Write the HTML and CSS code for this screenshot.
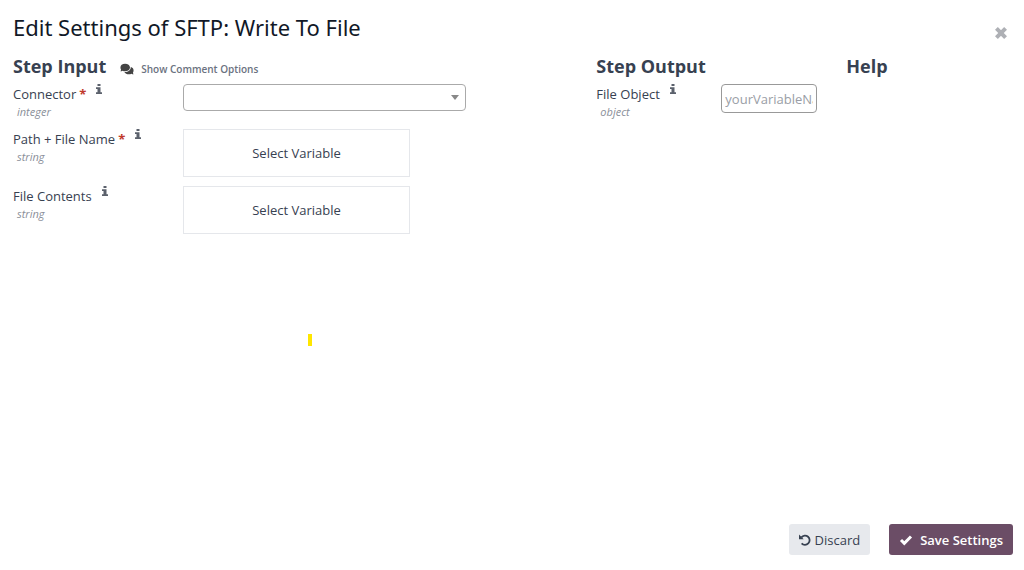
FILE: index.html
```html
<!DOCTYPE html>
<html lang="en">
<head>
<meta charset="utf-8">
<meta name="viewport" content="width=device-width, initial-scale=1">
<title>Edit Settings of SFTP: Write To File</title>
<link rel="stylesheet" href="styles.css">
</head>
<body>
<svg class="sprite" aria-hidden="true">
  <symbol id="info" viewBox="0 0 6 10"><path d="M1.5 0h3v2h-3zM0 3.3h4.5v5H6V10H0V8.300h1.500V5H0z"/></symbol>
  <symbol id="comments" viewBox="0 0 576 512"><path d="M416 192c0-88.400-93.100-160-208-160S0 103.600 0 192c0 34.300 14.100 65.900 38 92-13.400 30.200-35.500 54.200-35.800 54.500-2.200 2.300-2.800 5.700-1.500 8.700S4.800 352 8 352c36.600 0 66.900-12.300 88.700-25 32.200 15.700 70.300 25 111.300 25 114.900 0 208-71.600 208-160zm122 220c23.900-26 38-57.700 38-92 0-66.900-53.500-124.200-129.300-148.100.9 6.600 1.300 13.300 1.300 20.100 0 105.900-107.700 192-240 192-10.800 0-21.300-.8-31.700-1.900C207.800 439.600 281.800 480 368 480c41 0 79.100-9.200 111.300-25 21.800 12.700 52.100 25 88.700 25 3.200 0 6.100-1.900 7.300-4.800 1.300-2.900.7-6.300-1.500-8.700-.3-.3-22.400-24.200-35.800-54.500z"/></symbol>
</svg>
<div class="dialog" role="dialog" aria-labelledby="dialog-title">
  <header class="dialog-header">
    <h1 class="dialog-title" id="dialog-title">Edit Settings of SFTP: Write To File</h1>
    <button class="close" type="button" aria-label="Close">
      <svg class="close-icon" viewBox="0 0 14 14"><path d="M3 3l8 8M11 3l-8 8"/></svg>
    </button>
  </header>

  <main class="columns">
    <section class="inputs">
      <div class="section-head">
        <h2 class="section-title">Step Input</h2>
        <button class="comment-toggle" type="button">
          <svg class="comments-icon" viewBox="0 0 576 512"><use href="#comments"/></svg>
          Show Comment Options
        </button>
      </div>
      <div class="field">
        <div class="field-info">
          <div class="label-line">
            <label class="label" for="connector">Connector</label>
            <span class="required">*</span>
            <svg class="info-icon"><use href="#info"/></svg>
          </div>
          <div class="type">integer</div>
        </div>
        <div class="select-wrap">
          <select class="select" id="connector"><option></option></select>
          <svg class="caret" viewBox="0 0 8 5"><path d="M0 0h8L4 5z"/></svg>
        </div>
      </div>
      <div class="field">
        <div class="field-info">
          <div class="label-line">
            <span class="label" id="path-label">Path + File Name</span>
            <span class="required">*</span>
            <svg class="info-icon"><use href="#info"/></svg>
          </div>
          <div class="type">string</div>
        </div>
        <button class="variable" type="button" aria-describedby="path-label">Select Variable</button>
      </div>
      <div class="field">
        <div class="field-info">
          <div class="label-line">
            <span class="label" id="contents-label">File Contents</span>
            <svg class="info-icon"><use href="#info"/></svg>
          </div>
          <div class="type">string</div>
        </div>
        <button class="variable" type="button" aria-describedby="contents-label">Select Variable</button>
      </div>
    </section>

    <section class="outputs">
      <div class="section-head"><h2 class="section-title">Step Output</h2></div>
      <div class="output-field">
        <div class="field-info">
          <div class="label-line">
            <label class="label" for="file-object">File Object</label>
            <svg class="info-icon"><use href="#info"/></svg>
          </div>
          <div class="type">object</div>
        </div>
        <input class="text-input" id="file-object" type="text" placeholder="yourVariableName">
      </div>
    </section>

    <section class="help">
      <div class="section-head"><h2 class="section-title">Help</h2></div>
    </section>
    <span class="marker"></span>
  </main>

  <footer class="actions">
    <button class="button discard" type="button">
      <svg class="undo-icon" viewBox="0 0 12 12"><path class="undo-arc" d="M2.400 3.400A4.600 4.600 0 1 1 2.600 9.300"/><path d="M0 .5v4.700h4.700z"/></svg>
      Discard
    </button>
    <button class="button save" type="button">
      <svg class="check-icon" viewBox="0 0 14 12"><path d="M2 6l3.300 3.300L12 2.500"/></svg>
      Save Settings
    </button>
  </footer>
</div>
</body>
</html>
```
FILE: styles.css
```css
* { box-sizing: border-box; }

body {
  margin: 0;
  background: #fff;
  color: #374151;
  font: 13px/18px "Open Sans", "Noto Sans", sans-serif;
}

button, input, select { font: inherit; color: inherit; }
button { cursor: pointer; }
h1, h2 { margin: 0; }

.sprite { display: none; }

.dialog {
  display: flex;
  flex-direction: column;
  min-height: 100vh;
  padding: 11px 11px 15px 13px;
}

.dialog-header {
  display: flex;
  justify-content: space-between;
  align-items: flex-start;
  margin-bottom: 7px;
}

.dialog-title {
  color: #111827;
  font-family: "Noto Sans", sans-serif;
  font-size: 22px;
  font-weight: 400;
  line-height: 32px;
}

.close {
  display: flex;
  margin-top: 10px;
  padding: 4px;
  border: 0;
  background: none;
}

.close-icon {
  width: 16px;
  height: 16px;
  fill: none;
  stroke: #aeb0b5;
  stroke-width: 3.500;
}

.columns {
  position: relative;
  display: grid;
  grid-template-columns: 7fr 3fr 2fr;
  flex: 1;
}

.section-head {
  display: flex;
  align-items: center;
  gap: 14px;
  height: 28px;
  margin-bottom: 4px;
}

.section-title {
  font-size: 18px;
  font-weight: 700;
  line-height: 28px;
}

.comment-toggle {
  display: flex;
  align-items: center;
  gap: 7px;
  margin-top: 6px;
  padding: 0;
  border: 0;
  background: none;
  color: #6b7280;
  font-size: 10px;
  font-weight: 600;
}

.comments-icon {
  width: 14px;
  height: 12px;
  fill: #444;
}

.field {
  display: grid;
  grid-template-columns: 170px 1fr;
  align-items: start;
  margin-bottom: 9px;
}

.label-line {
  display: flex;
  gap: 3px;
  height: 20px;
}

.label { line-height: 20px; }

.required {
  color: #c0392b;
  font-weight: 700;
  line-height: 20px;
}

.info-icon {
  width: 6px;
  height: 10px;
  margin: 0 0 0 7px;
  fill: #5b616c;
}

.type {
  padding-left: 4px;
  color: #8a8f99;
  font-size: 11px;
  font-style: italic;
  line-height: 16px;
}

.select-wrap {
  position: relative;
  width: 283px;
}

.select {
  display: block;
  width: 100%;
  height: 27px;
  border: 1px solid #aaa;
  border-radius: 4px;
  background: #fff;
  appearance: none;
}

.caret {
  position: absolute;
  top: 11px;
  right: 7px;
  width: 8px;
  height: 5px;
  fill: #888;
  pointer-events: none;
}

.variable {
  width: 227px;
  height: 48px;
  border: 1px solid #e5e7eb;
  background: #fff;
}

.output-field {
  display: grid;
  grid-template-columns: 1fr 1fr;
  align-items: start;
}

.text-input {
  width: 96px;
  height: 29px;
  padding: 0 3px;
  border: 1px solid #999;
  border-radius: 4px;
}

.text-input::placeholder { color: #9a9ea6; }

.marker {
  position: absolute;
  top: 282px;
  left: 295px;
  width: 4px;
  height: 12px;
  background: #ffe600;
}

.actions {
  display: flex;
  justify-content: flex-end;
  gap: 19px;
}

.button {
  display: flex;
  align-items: center;
  height: 31px;
  padding: 0 10px;
  border: 0;
  border-radius: 3px;
}

.discard {
  gap: 4px;
  background: #e7e9ed;
  font-weight: 500;
}

.save {
  gap: 7px;
  background: #6b4d66;
  color: #fff;
  font-weight: 600;
}

.undo-icon {
  width: 12px;
  height: 12px;
  fill: currentColor;
}

.undo-arc {
  fill: none;
  stroke: currentColor;
  stroke-width: 1.800;
}

.check-icon {
  width: 14px;
  height: 12px;
  fill: none;
  stroke: currentColor;
  stroke-width: 3;
}
```
